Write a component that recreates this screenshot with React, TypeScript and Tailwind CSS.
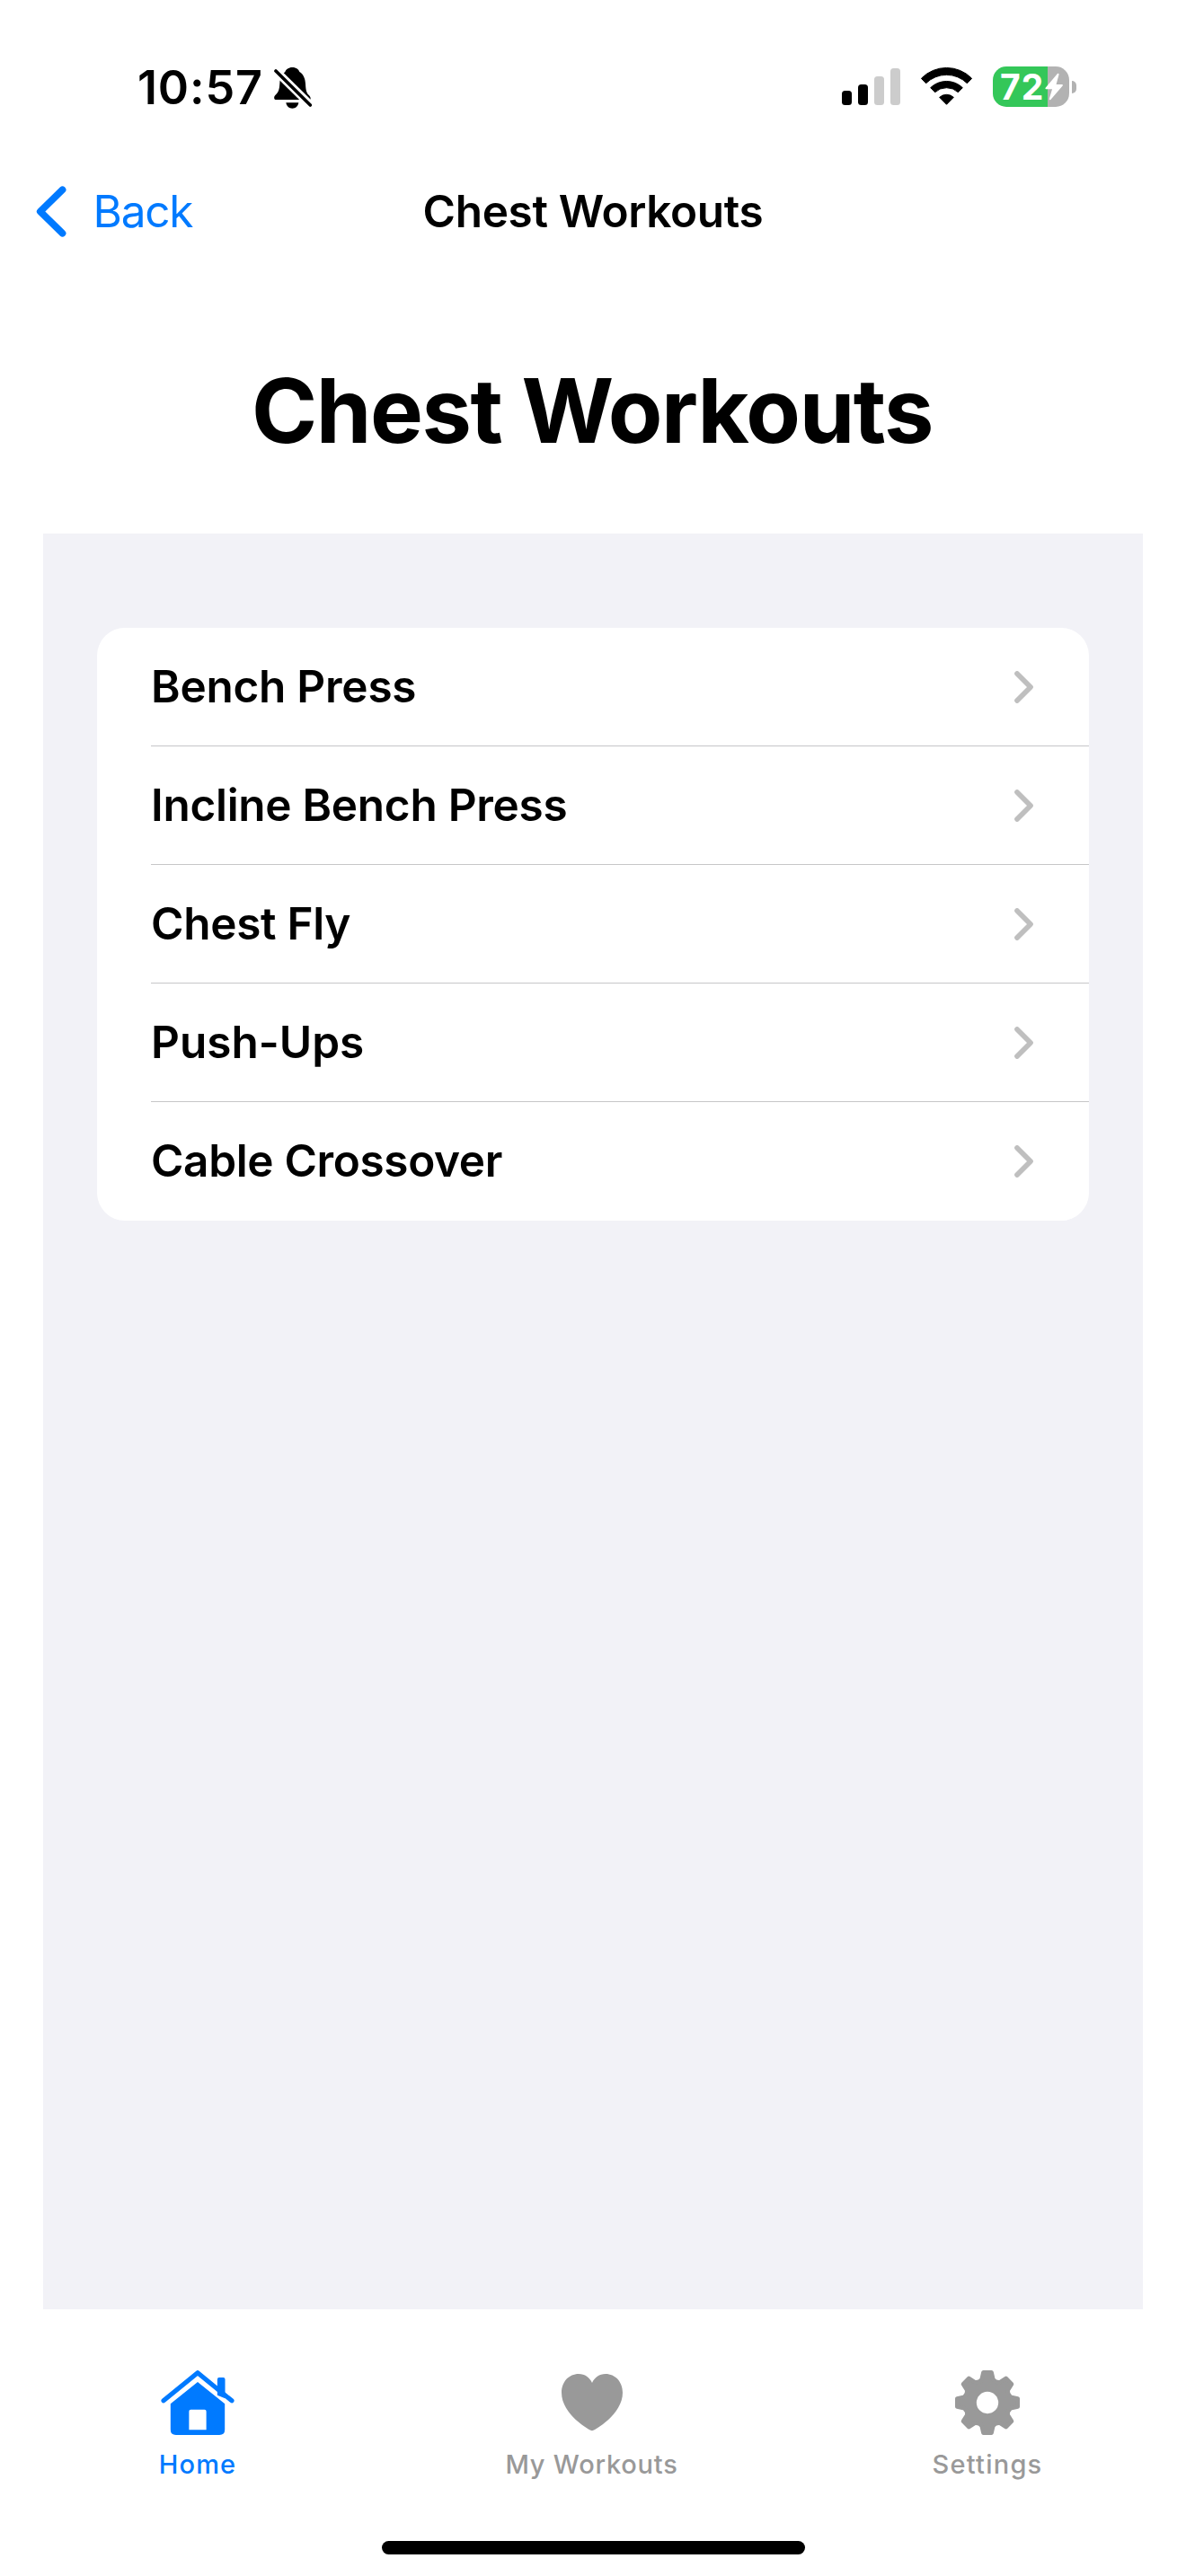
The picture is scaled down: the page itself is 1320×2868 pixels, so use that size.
import React from 'react';

const workouts: { name: string; tracking: string }[] = [
  { name: 'Bench Press', tracking: 'tracking-[-0.24px]' },
  { name: 'Incline Bench Press', tracking: 'tracking-[-0.28px]' },
  { name: 'Chest Fly', tracking: 'tracking-[-0.3px]' },
  { name: 'Push-Ups', tracking: 'tracking-[0px]' },
  { name: 'Cable Crossover', tracking: 'tracking-[-0.35px]' },
];

function BellOff() {
  return (
    <svg className="mt-[75px] ml-[12.5px] h-[46px] w-[42px]" viewBox="495 45 126 138">
      <path d="M556 45C570 45 577 52 580 60C593 68 599 82 600 100C601 125 605 132 612 139C617 144 618 149 616 153H500C494 151 494 143 499 138C510 128 513 118 514 98C515 80 522 68 532 60C535 52 543 45 556 45Z" />
      <path d="M535 163H577C575 175 567 182 556 182C545 182 537 175 535 163Z" />
      <path d="M490 46L626 180" stroke="#fff" strokeWidth="27" />
      <path d="M501 57L616 171" stroke="#000" strokeWidth="11" strokeLinecap="round" />
    </svg>
  );
}

function Signal() {
  return (
    <div className="mt-[76px] flex h-[41px] items-end gap-[7px]">
      <div className="h-[16px] w-[11px] rounded-[3.5px] bg-black" />
      <div className="h-[23px] w-[11px] rounded-[3.5px] bg-black" />
      <div className="h-[32px] w-[11px] rounded-[3.5px] bg-[#cccccc]" />
      <div className="h-[41px] w-[11px] rounded-[3.5px] bg-[#cccccc]" />
    </div>
  );
}

function Wifi() {
  return (
    <svg className="mt-[75px] ml-[23px] h-[42px] w-[57px]" viewBox="315 45 171 126">
      <g stroke="#000" strokeWidth="3" strokeLinejoin="round">
        <path d="M317 81A118 118 0 0 1 484 81Q485 82 484 83L469 98A98 98 0 0 0 332 98L317 83Q316 82 317 81Z" />
        <path d="M347 113A77 77 0 0 1 454 113L439 128A57 57 0 0 0 362 128Z" />
        <path d="M377 145A35 35 0 0 1 424 145L400.500 169Z" />
      </g>
    </svg>
  );
}

function Battery() {
  return (
    <div className="mt-[74px] ml-[23px] flex items-center">
      <div className="relative flex h-[45px] w-[85px] items-center rounded-[15px] bg-[linear-gradient(to_right,#34c759_61px,#b2b2b2_61px)] pl-[8px]">
        <span className="text-[39px] leading-[45px] font-bold tracking-[1px] whitespace-nowrap text-white">72</span>
        <svg className="absolute top-0 left-0 h-[45px] w-[85px]" viewBox="555 42 255 135">
          <path d="M773 68L733 115H757L746 151L786 105H763Z" fill="#fff" stroke="#fff" strokeWidth="5.500" strokeLinejoin="round" />
        </svg>
      </div>
      <div className="ml-[3px] h-[14px] w-[5px] rounded-r-[6px] bg-[#b2b2b2]" />
    </div>
  );
}

function Chevron() {
  return (
    <svg className="h-[36px] w-[21px]" viewBox="0 0 21 36" fill="none">
      <path d="M3 3L18 18L3 33" stroke="#bfbfbf" strokeWidth="5.700" strokeLinecap="round" strokeLinejoin="round" />
    </svg>
  );
}

function HomeIcon() {
  return (
    <svg className="h-[72px] w-[82px]" viewBox="86 86 246 217" fill="#007aff">
      <path d="M275 170V116Q275 110 281 110H295Q301 110 301 116V180Z" />
      <path d="M94.500 188L209 94L323.500 188" fill="none" stroke="#007aff" strokeWidth="15.500" strokeLinecap="round" strokeLinejoin="round" />
      <path
        fillRule="evenodd"
        d="M209 125L300 198V285Q300 303 282 303H136Q118 303 118 285V198ZM186 218Q180 218 180 224V286H238V224Q238 218 232 218Z"
      />
    </svg>
  );
}

function HeartIcon() {
  return (
    <svg className="mr-[2px] h-[63.300px] w-[68px]" viewBox="255 101 204 190" fill="#999999">
      <path d="M357 291C350 291 255 236 255 164C255 127 280 101 312 101C333 101 349 113 357 131C365 113 381 101 402 101C434 101 459 127 459 164C459 236 364 291 357 291Z" />
    </svg>
  );
}

function gearOutline() {
  const corners = [[-19, -77], [-13.5, -101], [13.5, -101], [19, -77], [27.5, -66.4]];
  const turn = ([x, y]: number[], k: number) => {
    const a = (k * Math.PI) / 4;
    return `${(x * Math.cos(a) - y * Math.sin(a)).toFixed(2)} ${(x * Math.sin(a) + y * Math.cos(a)).toFixed(2)}`;
  };
  let d = `M${turn(corners[0], 0)}`;
  for (let k = 0; k < 8; k++) {
    d += `L${turn(corners[1], k)}L${turn(corners[2], k)}L${turn(corners[3], k)}Q${turn(corners[4], k)} ${turn(corners[0], k + 1)}`;
  }
  return d + 'Z';
}

function GearIcon() {
  return (
    <svg className="mr-[2px] h-[72px] w-[72px]" viewBox="-108 -108 216 216">
      <path d={gearOutline()} fill="#999999" stroke="#999999" strokeWidth="14" strokeLinejoin="round" />
      <circle r="36.500" fill="#fff" />
    </svg>
  );
}

export default function App() {
  return (
    <div className="flex h-[2868px] w-[1320px] flex-col overflow-hidden bg-white font-['Inter',sans-serif] text-black">
      <header className="flex h-[196px] items-start justify-between pr-[122px] pl-[153px]">
        <div className="flex items-start">
          <span className="mt-[72px] text-[52px] leading-[52px] font-semibold tracking-[0.86px] whitespace-nowrap">10:57</span>
          <BellOff />
        </div>
        <div className="flex items-start">
          <Signal />
          <Wifi />
          <Battery />
        </div>
      </header>

      <nav className="grid h-[78px] grid-cols-[1fr_auto_1fr] items-center text-[49.5px] leading-[60px]">
        <a className="flex items-center pl-[40px] text-[#007aff]">
          <svg className="h-[57px] w-[34px]" viewBox="0 0 34 57" fill="none">
            <path d="M29.500 4.300L4.800 28.500L29.500 52.700" stroke="#007aff" strokeWidth="7.800" strokeLinecap="round" strokeLinejoin="round" />
          </svg>
          <span className="ml-[29.5px] tracking-[-1.25px]">Back</span>
        </a>
        <span className="font-semibold tracking-[-0.33px] whitespace-nowrap">Chest Workouts</span>
        <span />
      </nav>

      <h1 className="flex h-[320px] items-center justify-center pt-[46px] pr-[2px] text-[99px] leading-[120px] font-bold tracking-[-1.42px] whitespace-nowrap">
        Chest Workouts
      </h1>

      <main className="mx-[48px] h-[1977px] bg-[#f2f2f7] px-[60px] pt-[105px]">
        <ul className="overflow-hidden rounded-[31px] bg-white pl-[60px]">
          {workouts.map((w) => (
            <li
              key={w.name}
              className="flex h-[132px] items-center justify-between border-b border-[#c6c6c8] pr-[62px] last:border-white"
            >
              <span className={`-mt-px text-[49.5px] leading-[60px] font-semibold ${w.tracking}`}>{w.name}</span>
              <Chevron />
            </li>
          ))}
        </ul>
      </main>

      <footer className="flex h-[297px] flex-col">
        <div className="grid h-[258px] grid-cols-3 pt-[68px] text-[29px] leading-[29px] font-medium text-[#999999]">
          <div className="flex flex-col items-center">
            <div className="flex h-[72px] items-center"><HomeIcon /></div>
            <span className="mt-[18px] tracking-[1.18px] text-[#007aff]">Home</span>
          </div>
          <div className="flex flex-col items-center">
            <div className="flex h-[72px] items-center"><HeartIcon /></div>
            <span className="mt-[18px] mr-[3px] tracking-[0.77px]">My Workouts</span>
          </div>
          <div className="flex flex-col items-center">
            <div className="flex h-[72px] items-center"><GearIcon /></div>
            <span className="mt-[18px] mr-[2px] tracking-[1.23px]">Settings</span>
          </div>
        </div>
        <div className="mx-auto h-[15px] w-[471px] rounded-full bg-black" />
      </footer>
    </div>
  );
}
